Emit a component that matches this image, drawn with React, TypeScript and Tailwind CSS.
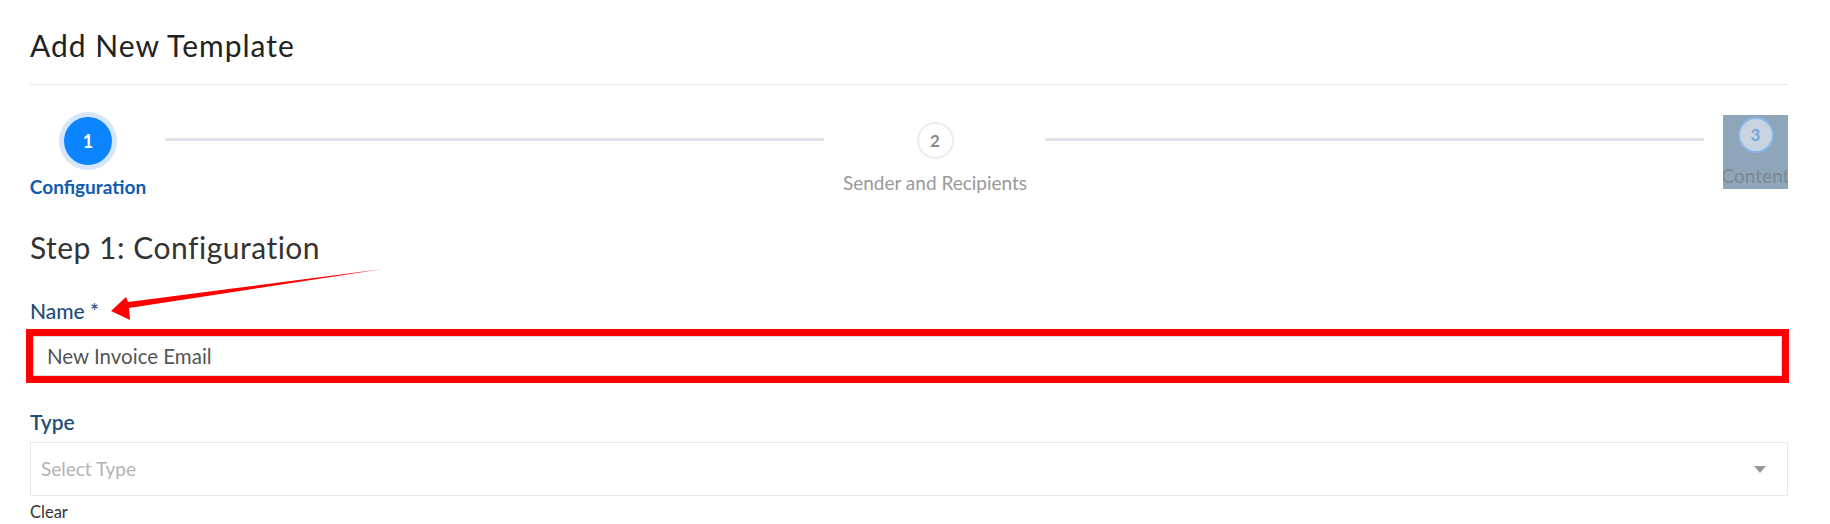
import React from "react";

export default function App() {
  return (
    <div
      className="relative w-[1830px] h-[524px] bg-white overflow-hidden pl-[30px] pr-[42px]"
      style={{ fontFamily: "Lato, 'Noto Sans', sans-serif" }}
    >
      <h1 className="pt-[27px] text-[30px] leading-[36px] font-normal tracking-[1px] text-[#222]">Add New Template</h1>
      <div className="mt-[21px] h-px bg-[#e6e6e6]" />

      {/* Stepper */}
      <div className="mt-[15px] flex items-start">
        <div className="flex flex-col items-center w-[116px]">
          <div className="mt-[17px] w-[48px] h-[48px] rounded-full bg-[#0a84ff] shadow-[0_0_0_5px_#d5e6fb] flex items-center justify-center text-white font-bold text-[18px]">
            1
          </div>
          <div className="mt-[12px] text-[19px] leading-[20px] font-bold text-[#0f5bb0] whitespace-nowrap">Configuration</div>
        </div>
        <div className="flex-1 mt-[38px] ml-[19px] mr-[19px] h-[3px] bg-[#e3e3ec]" />
        <div className="flex flex-col items-center w-[184px]">
          <div className="mt-[22px] w-[37px] h-[37px] rounded-full bg-white border-2 border-[#ececec] flex items-center justify-center text-[#8a8a8a] font-bold text-[17px]">
            2
          </div>
          <div className="mt-[14px] text-[19px] leading-[20px] text-[#999] whitespace-nowrap">Sender and Recipients</div>
        </div>
        <div className="flex-1 mt-[38px] ml-[18px] mr-[19px] h-[3px] bg-[#e3e3ec]" />
        <div className="mt-[15px] w-[65px] h-[74px] bg-[#8fa5b9] flex flex-col items-center overflow-hidden">
          <div className="mt-[2px] w-[36px] h-[36px] rounded-full bg-[#c8d5e0] border-2 border-[#8ab6ec] flex items-center justify-center text-[#78a6dd] font-bold text-[17px]">
            3
          </div>
          <div className="mt-[13px] text-[19px] leading-[20px] text-[#7d8893] whitespace-nowrap">Content</div>
        </div>
      </div>

      <h2 className="mt-[32px] text-[30px] leading-[36px] font-normal tracking-[0.5px] text-[#333]">Step 1: Configuration</h2>

      <label className="block mt-[34px] text-[21px] leading-[24px] font-medium text-[#1f4e7a]">Name *</label>
      <div className="mt-[6px] ml-[-4px] mr-[-1px] border-[7px] border-[#ff0000]">
        <div className="h-[40px] border border-[#dedede] bg-white flex items-center pl-[13px] text-[20.5px] text-[#555]">
          New Invoice Email
        </div>
      </div>

      <label className="block mt-[27px] text-[21px] leading-[24px] font-semibold text-[#1f4e7a]">Type</label>
      <div className="mt-[8px] h-[54px] border border-[#e8e8e8] bg-white flex items-center justify-between pl-[10px] pr-[21px]">
        <span className="text-[19px] text-[#b3b3b3]">Select Type</span>
        <svg width="12" height="7" viewBox="0 0 12 7">
          <polygon points="0,0 12,0 6,7" fill="#999" />
        </svg>
      </div>
      <div className="mt-[6px] text-[16.5px] leading-[20px] text-[#333]">Clear</div>

      {/* annotation arrow */}
      <svg className="absolute left-0 top-0 pointer-events-none" width="1830" height="524">
        <polygon points="383,269 128,302 126,297 111,311 130,320 129,308" fill="#ff0000" />
      </svg>
    </div>
  );
}
